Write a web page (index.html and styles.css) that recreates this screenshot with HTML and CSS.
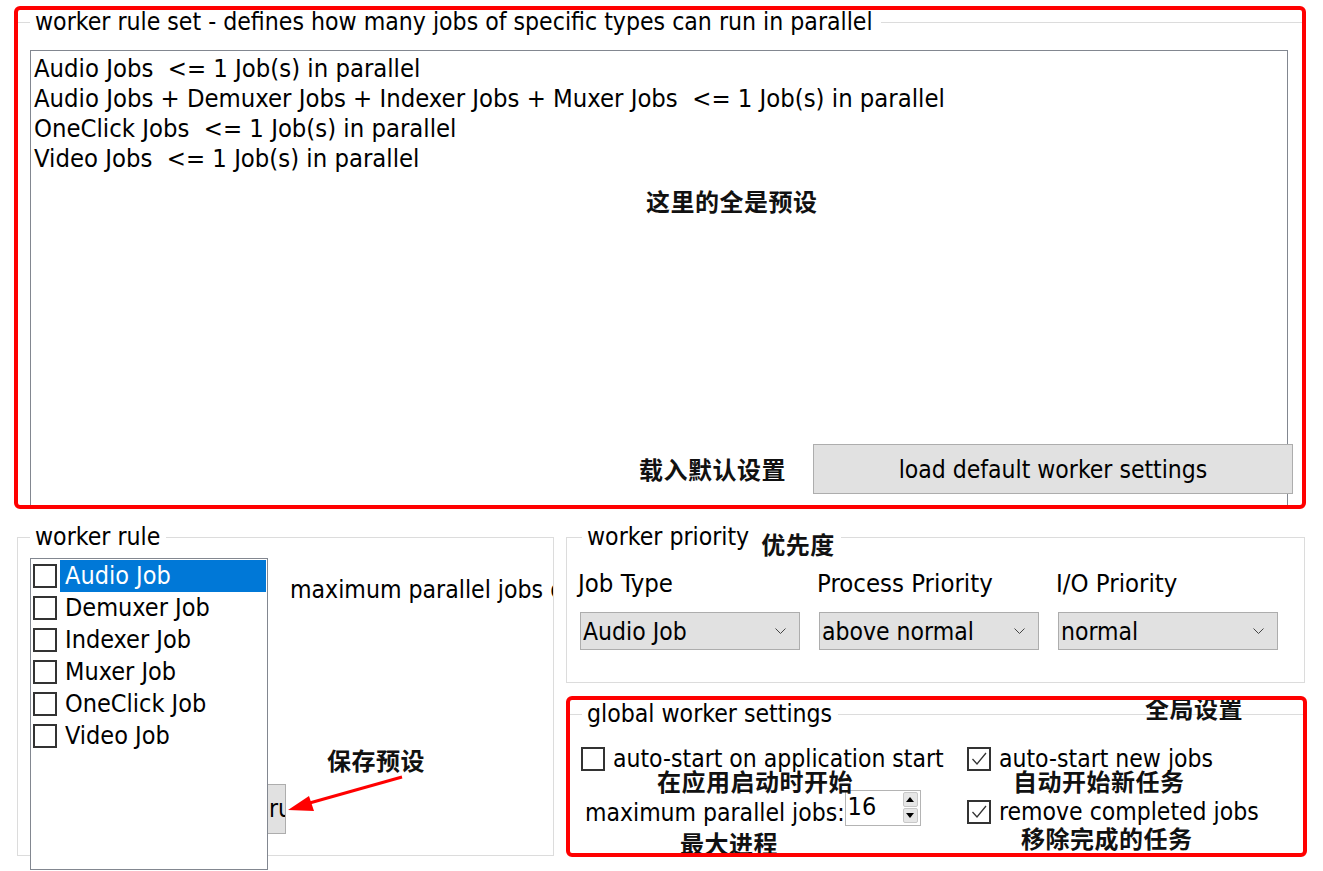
FILE: index.html
```html
<!DOCTYPE html>
<html lang="en">
<head>
<meta charset="utf-8">
<title>Worker settings</title>
<link rel="stylesheet" href="styles.css">
</head>
<body>
<div class="window">
  <section class="ruleset mark">
    <fieldset class="group rs-group">
      <legend>worker rule set - defines how many jobs of specific types can run in parallel</legend>
      <div class="rulelist">
        <div class="rule">Audio Jobs  &lt;= 1 Job(s) in parallel</div>
        <div class="rule">Audio Jobs + Demuxer Jobs + Indexer Jobs + Muxer Jobs  &lt;= 1 Job(s) in parallel</div>
        <div class="rule">OneClick Jobs  &lt;= 1 Job(s) in parallel</div>
        <div class="rule">Video Jobs  &lt;= 1 Job(s) in parallel</div>
      </div>
    </fieldset>
    <div class="note note-preset">这里的全是预设</div>
    <div class="loadrow">
      <span class="note">载入默认设置</span>
      <button class="btn load-btn" type="button">load default worker settings</button>
    </div>
  </section>

  <div class="bottom">
    <fieldset class="group rule-group">
      <legend>worker rule</legend>
      <div class="rule-row">
        <div class="checklist">
          <div class="item selected"><span class="cb"></span><span class="lbl">Audio Job</span></div>
          <div class="item"><span class="cb"></span><span class="lbl">Demuxer Job</span></div>
          <div class="item"><span class="cb"></span><span class="lbl">Indexer Job</span></div>
          <div class="item"><span class="cb"></span><span class="lbl">Muxer Job</span></div>
          <div class="item"><span class="cb"></span><span class="lbl">OneClick Job</span></div>
          <div class="item"><span class="cb"></span><span class="lbl">Video Job</span></div>
        </div>
        <div class="rule-side">
          <div class="maxlbl">maximum parallel jobs of this type</div>
          <div class="clipbtn">ru</div>
        </div>
      </div>
    </fieldset>

    <div class="rightcol">
      <fieldset class="group priority">
        <legend><span>worker priority</span><span class="note note-inline">优先度</span></legend>
        <div class="prio-grid">
          <div class="plbl">Job Type</div>
          <div class="plbl">Process Priority</div>
          <div class="plbl">I/O Priority</div>
          <div class="combo"><span>Audio Job</span><svg class="chev" width="11" height="6" viewBox="0 0 11 6"><polyline points="0.5,0.5 5.5,5.5 10.5,0.5"/></svg></div>
          <div class="combo"><span>above normal</span><svg class="chev" width="11" height="6" viewBox="0 0 11 6"><polyline points="0.5,0.5 5.5,5.5 10.5,0.5"/></svg></div>
          <div class="combo"><span>normal</span><svg class="chev" width="11" height="6" viewBox="0 0 11 6"><polyline points="0.5,0.5 5.5,5.5 10.5,0.5"/></svg></div>
        </div>
      </fieldset>

      <section class="global mark">
        <fieldset class="group gw-group">
          <legend>global worker settings</legend>
          <div class="gw-grid">
            <div class="chk"><span class="cb"></span><span>auto-start on application start</span></div>
            <div class="chk"><span class="cb checked"><svg width="20" height="20" viewBox="0 0 20 20"><polyline points="3.5,10 8,15 17,4"/></svg></span><span>auto-start new jobs</span></div>
            <div class="maxjobs">
              <span class="mj-lbl">maximum parallel jobs:</span>
              <div class="spinner">
                <span class="spin-val">16</span>
                <div class="spin-btns"><span class="sb up"></span><span class="sb down"></span></div>
              </div>
            </div>
            <div class="chk chk2"><span class="cb checked"><svg width="20" height="20" viewBox="0 0 20 20"><polyline points="3.5,10 8,15 17,4"/></svg></span><span>remove completed jobs</span></div>
          </div>
        </fieldset>
        <div class="note n-global">全局设置</div>
        <div class="note n-appstart">在应用启动时开始</div>
        <div class="note n-autonew">自动开始新任务</div>
        <div class="note n-maxproc">最大进程</div>
        <div class="note n-remove">移除完成的任务</div>
      </section>
    </div>
  </div>

  <div class="note n-save">保存预设</div>
  <svg class="arrow" width="130" height="50" viewBox="0 0 130 50">
    <line x1="122" y1="12" x2="26" y2="39"/>
    <polygon points="8,45 29,31 34,46"/>
  </svg>
</div>
</body>
</html>
```

FILE: styles.css
```css
* { box-sizing: border-box; }

html, body {
  margin: 0;
  padding: 0;
  background: #ffffff;
}

body {
  font-family: "DejaVu Sans Condensed", "DejaVu Sans", sans-serif;
  font-stretch: condensed;
  color: #000;
}

.window {
  position: relative;
  width: 1323px;
  height: 871px;
  overflow: hidden;
  background: #fff;
}

.note {
  font-family: "Noto Sans CJK SC", sans-serif;
  font-weight: 700;
  font-size: 24px;
  line-height: 24px;
  color: #111;
  white-space: nowrap;
  letter-spacing: 0.5px;
}

/* ---------- group boxes ---------- */
.group {
  margin: 0;
  padding: 0;
  min-width: 0;
  border: 1px solid #dcdcdc;
}

.group > legend {
  padding: 0 6px 0 5px;
  line-height: 24px;
  font-size: 24.6px;
  white-space: nowrap;
}

/* ---------- top: rule set ---------- */
.ruleset {
  position: relative;
  margin: 6px 0 0 14px;
  width: 1292px;
  height: 503px;
  border: 4px solid #ff0000;
  border-radius: 6px;
  overflow: hidden;
}

.rs-group {
  height: 100%;
  border-left: 0;
  border-right: 0;
  border-bottom: 0;
}

.rs-group > legend {
  margin-left: 12px;
  padding: 0 8px 0 5px;
}

.rulelist {
  margin: 16px 14px 0 12px;
  height: 470px;
  border: 1px solid #828790;
  padding: 2px 0 0 3px;
  background: #fff;
}

.rule {
  font-size: 25.4px;
  line-height: 30px;
  white-space: pre;
}

.note-preset {
  position: absolute;
  left: 628px;
  top: 179px;
}

.loadrow {
  position: absolute;
  left: 621px;
  top: 434px;
  display: flex;
  align-items: center;
  gap: 27px;
}

.btn {
  font-family: inherit;
  font-stretch: condensed;
  color: #000;
  background: #e1e1e1;
  border: 1px solid #adadad;
  border-radius: 0;
  padding: 0;
}

.load-btn {
  width: 480px;
  height: 50px;
  font-size: 24.5px;
}

/* ---------- bottom ---------- */
.bottom {
  display: grid;
  grid-template-columns: 537px 741px;
  column-gap: 12px;
  margin: 16px 0 0 17px;
}

.rule-group {
  height: 331px;
}

.rule-group > legend {
  margin-left: 12px;
}

.rule-row {
  display: flex;
  align-items: flex-start;
  margin-top: 9px;
}

.checklist {
  flex: none;
  margin-left: 12px;
  width: 238px;
  height: 312px;
  border: 1px solid #828790;
  padding-top: 1px;
  background: #fff;
  position: relative;
  z-index: 1;
}

.item {
  display: flex;
  align-items: center;
  height: 32px;
}

.cb {
  flex: none;
  width: 24px;
  height: 24px;
  border: 2px solid #333;
  background: #fff;
  display: inline-flex;
}

.item .cb {
  margin-left: 2px;
}

.cb svg polyline {
  fill: none;
  stroke: #333;
  stroke-width: 1.3;
}

.lbl {
  flex: 1;
  margin: 0 1px 0 3px;
  height: 32px;
  line-height: 32px;
  padding-left: 5px;
  font-size: 25px;
  white-space: nowrap;
}

.item.selected .lbl {
  background: #0078d7;
  color: #fff;
}

.rule-side {
  flex: 1;
  min-width: 0;
  overflow: hidden;
  display: flex;
  flex-direction: column;
  align-items: flex-start;
}

.maxlbl {
  margin: 20px 0 0 22px;
  font-size: 24.6px;
  line-height: 24px;
  white-space: nowrap;
}

.clipbtn {
  margin-top: 182px;
  width: 18px;
  height: 50px;
  background: #e1e1e1;
  border: 1px solid #adadad;
  border-left: 0;
  overflow: hidden;
  font-size: 24.5px;
  line-height: 48px;
  padding-left: 1px;
  white-space: nowrap;
}

.n-save {
  position: absolute;
  left: 327px;
  top: 748px;
}

.arrow {
  position: absolute;
  left: 280px;
  top: 765px;
}

.arrow line {
  stroke: #f00;
  stroke-width: 3;
}

.arrow polygon {
  fill: #f00;
}

/* ---------- right column ---------- */
.rightcol {
  display: flex;
  flex-direction: column;
}

.priority {
  width: 739px;
  height: 158px;
}

.priority > legend {
  margin-left: 15px;
  display: flex;
  align-items: flex-start;
}

.note-inline {
  margin: 7px 0 -7px 12px;
}

.prio-grid {
  display: grid;
  grid-template-columns: 239px 239px 239px;
  row-gap: 17px;
  margin-top: 22px;
  padding-left: 11px;
}

.plbl {
  font-size: 25.5px;
  line-height: 24px;
  white-space: nowrap;
}

.combo {
  margin-left: 2px;
  width: 220px;
  height: 38px;
  background: #e1e1e1;
  border: 1px solid #adadad;
  display: flex;
  align-items: center;
  justify-content: space-between;
  padding: 0 13px 0 2px;
  font-size: 24.5px;
  white-space: nowrap;
}

.chev polyline {
  fill: none;
  stroke: #444;
  stroke-width: 1;
}

/* ---------- global worker settings ---------- */
.global {
  position: relative;
  margin-top: 13px;
  width: 741px;
  height: 161px;
  border: 4px solid #ff0000;
  border-radius: 6px;
  overflow: hidden;
}

.gw-group {
  margin-top: 2px;
  border-left: 0;
  border-right: 0;
  border-bottom: 0;
  height: 160px;
}

.gw-group > legend {
  margin-left: 12px;
}

.gw-grid {
  display: grid;
  grid-template-columns: 386px auto;
  grid-template-rows: 24px 36px;
  row-gap: 19px;
  margin-top: 21px;
  padding-left: 11px;
  font-size: 24.5px;
}

.chk {
  display: flex;
  align-items: center;
  gap: 8px;
  line-height: 24px;
  white-space: nowrap;
}

.chk2 {
  margin-top: 10px;
  align-self: start;
}

.maxjobs {
  display: flex;
  align-items: flex-start;
  white-space: nowrap;
}

.mj-lbl {
  margin: 11px 0 0 4px;
  line-height: 24px;
}

.spinner {
  width: 76px;
  height: 36px;
  border: 1px solid #b4b4b4;
  display: flex;
  align-items: flex-start;
  justify-content: space-between;
  background: #fff;
}

.spin-val {
  padding-left: 2px;
  font-size: 25px;
  line-height: 32px;
}

.spin-btns {
  display: flex;
  flex-direction: column;
  gap: 1px;
  margin: 1px 2px 0 0;
}

.sb {
  width: 15px;
  height: 15px;
  background: #e6e6e6;
  border: 1px solid #c8c8c8;
  border-radius: 2px;
  display: flex;
  align-items: center;
  justify-content: center;
}

.sb::after {
  content: "";
  width: 0;
  height: 0;
  border-left: 4px solid transparent;
  border-right: 4px solid transparent;
}

.sb.up::after {
  border-bottom: 5px solid #000;
}

.sb.down::after {
  border-top: 5px solid #000;
}

.n-global { position: absolute; left: 575px; top: -4px; }
.n-appstart { position: absolute; left: 87px; top: 69px; }
.n-autonew { position: absolute; left: 443px; top: 69px; }
.n-maxproc { position: absolute; left: 110px; top: 131px; }
.n-remove { position: absolute; left: 451px; top: 126px; }
```
